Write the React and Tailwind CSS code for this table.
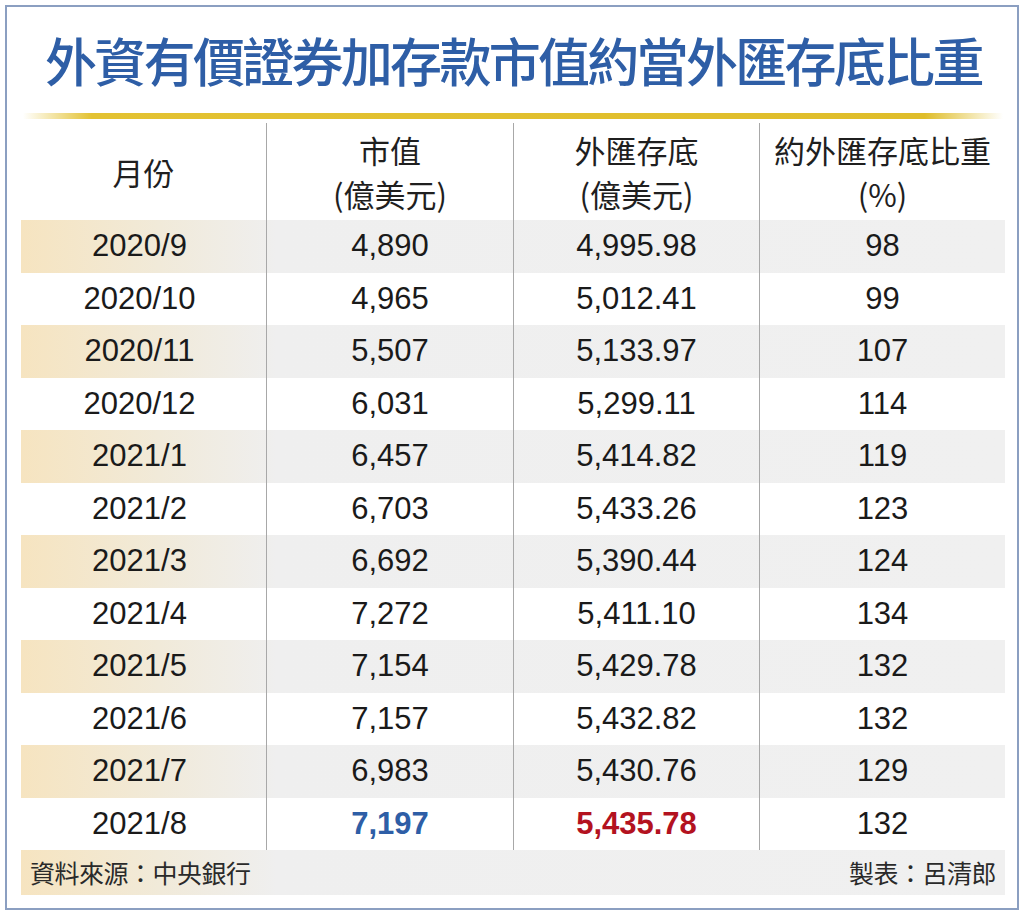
import React from "react";

const rows = [
  ["2020/9", "4,890", "4,995.98", "98"],
  ["2020/10", "4,965", "5,012.41", "99"],
  ["2020/11", "5,507", "5,133.97", "107"],
  ["2020/12", "6,031", "5,299.11", "114"],
  ["2021/1", "6,457", "5,414.82", "119"],
  ["2021/2", "6,703", "5,433.26", "123"],
  ["2021/3", "6,692", "5,390.44", "124"],
  ["2021/4", "7,272", "5,411.10", "134"],
  ["2021/5", "7,154", "5,429.78", "132"],
  ["2021/6", "7,157", "5,432.82", "132"],
  ["2021/7", "6,983", "5,430.76", "129"],
  ["2021/8", "7,197", "5,435.78", "132"],
];

const cjk = "font-['Noto_Sans_CJK_TC','Noto_Sans_CJK_SC',sans-serif]";
const num = "font-['Liberation_Sans',Arial,sans-serif]";
const shade =
  "bg-[linear-gradient(90deg,#f6e4c0_0%,#f1ead9_14%,#efefef_26%,#f0f0f0_100%)]";

export default function App() {
  return (
    <div className="w-[1024px] h-[914px] bg-white pt-[5px] pl-[5px]">
      <div className="w-[1014px] h-[905px] border-2 border-[#8b9fc1] flex flex-col">
        {/* title */}
        <div
          className={`${cjk} h-[106px] pt-[22px] pl-[38px] text-[52px] leading-[62px] font-medium tracking-[-2.7px] whitespace-nowrap text-[#2e5ea6]`}
        >
          外資有價證券加存款市值約當外匯存底比重
        </div>

        {/* gold rule */}
        <div className="ml-[16px] w-[980px] h-[6px] bg-[linear-gradient(90deg,rgba(230,195,40,0)_0%,#e3c232_7%,#dfbd2a_92%,rgba(230,195,40,0)_100%)]" />

        {/* table */}
        <div className="ml-[14px] w-[984px] mt-[4px]">
          <div className={`${cjk} grid grid-cols-[245px_247px_246px_246px] h-[97px] text-[31px] leading-[44px] text-[#1f1f1f]`}>
            <div className="flex items-center justify-center">月份</div>
            <div className="flex flex-col items-center justify-center border-l border-[#a8a8a8]">
              <span>市值</span>
              <span>(億美元)</span>
            </div>
            <div className="flex flex-col items-center justify-center border-l border-[#a8a8a8]">
              <span>外匯存底</span>
              <span>(億美元)</span>
            </div>
            <div className="flex flex-col items-center justify-center border-l border-[#a8a8a8]">
              <span>約外匯存底比重</span>
              <span>(%)</span>
            </div>
          </div>

          {rows.map((r, i) => {
            const last = i === rows.length - 1;
            return (
              <div
                key={r[0]}
                className={`${num} grid grid-cols-[245px_247px_246px_246px] h-[52.5px] text-[31px] text-[#1a1a1a] ${
                  i % 2 === 0 ? shade : "bg-white"
                }`}
              >
                <div className="flex items-center justify-center pr-[8px]">{r[0]}</div>
                <div
                  className={`flex items-center justify-center border-l border-[#a8a8a8] ${
                    last ? "font-bold text-[#2e5ea6]" : ""
                  }`}
                >
                  {r[1]}
                </div>
                <div
                  className={`flex items-center justify-center border-l border-[#a8a8a8] ${
                    last ? "font-bold text-[#b3121f]" : ""
                  }`}
                >
                  {r[2]}
                </div>
                <div className="flex items-center justify-center border-l border-[#a8a8a8]">
                  {r[3]}
                </div>
              </div>
            );
          })}

          {/* footer */}
          <div
            className={`${cjk} ${shade} h-[45px] flex items-center justify-between px-[9px] text-[25px] tracking-[-0.5px] text-[#2a2a2a]`}
          >
            <span>資料來源：中央銀行</span>
            <span>製表：呂清郎</span>
          </div>
        </div>
      </div>
    </div>
  );
}
